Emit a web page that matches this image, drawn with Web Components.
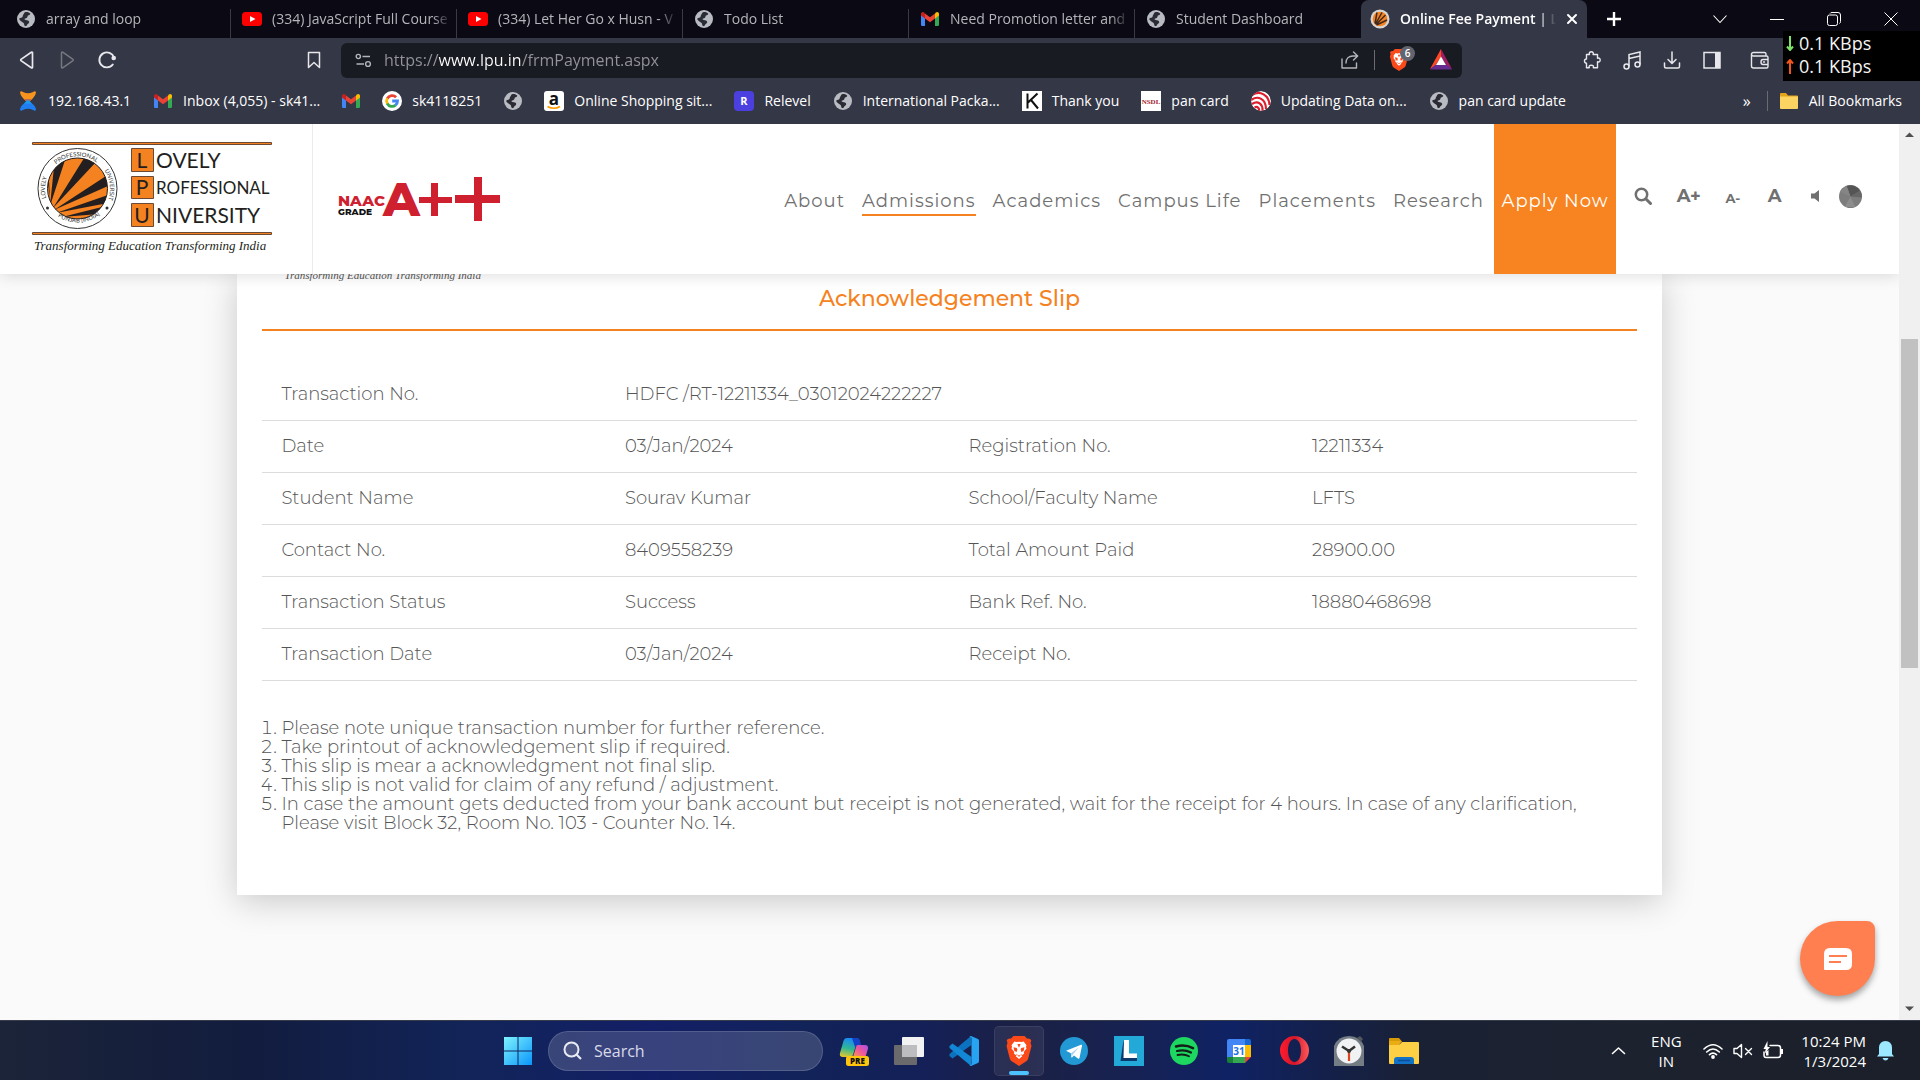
<!DOCTYPE html>
<html lang="en">
<head>
<meta charset="utf-8">
<title>Online Fee Payment | Lovely Professional University</title>
<style>
  html, body { margin: 0; height: 100%; }
  body { font-family: "Segoe UI", "Open Sans", "Noto Sans", sans-serif; overflow: hidden; }
</style>
</head>
<body>
<desktop-screen></desktop-screen>

<template id="t-desktop">
  <style>
    :host { display: flex; flex-direction: column; height: 100vh; background: #fafafa; }
    .view { flex: 1; display: flex; min-height: 0; }
    .page { flex: 1; min-width: 0; display: flex; flex-direction: column; overflow: hidden; }
  </style>
  <tab-strip></tab-strip>
  <nav-toolbar></nav-toolbar>
  <bookmark-bar></bookmark-bar>
  <div class="view">
    <div class="page">
      <site-header></site-header>
      <payment-slip></payment-slip>
    </div>
    <scroll-rail></scroll-rail>
  </div>
  <chat-launcher></chat-launcher>
  <task-bar></task-bar>
</template>

<template id="t-tab">
  <style>
    :host { display: block; width: 226px; flex: 0 1 226px; min-width: 0; box-sizing: border-box; border-right: 1px solid #3a3a42; height: 29px; margin-top: 9px; }
    :host([active]) { background: #343746; border-radius: 8px 8px 0 0; border-right: 0; height: 38px; margin-top: 0; }
    :host([last]) { border-right: 0; }
    .tab { display: flex; align-items: center; width: 100%; height: 29px; padding: 0 5px 9px 11px; box-sizing: border-box; gap: 10px; }
    :host([active]) .tab { height: 38px; padding: 0 9px 0 9px; }
    button { all: unset; display: flex; align-items: center; gap: 10px; flex: 1; min-width: 0; font-size: 14px; line-height: 20px; color: #b4b5ba; }
    .t { flex: 1; white-space: nowrap; overflow: hidden; -webkit-mask-image: linear-gradient(90deg, #000 calc(100% - 18px), transparent); mask-image: linear-gradient(90deg, #000 calc(100% - 18px), transparent); }
    :host([active]) button { color: #fff; font-weight: 600; }
    .x { flex: none; display: none; }
    :host([active]) .x { display: flex; }
  </style>
  <div class="tab"><button role="tab"><slot name="icon"></slot><span class="t"><slot></slot></span></button><button class="x" aria-label="Close tab"><app-icon name="cross" size="12"></app-icon></button></div>
</template>

<template id="t-tabs">
  <style>
    :host { display: flex; height: 38px; background: #0b0a14; padding-left: 5px; color: #fff; }
    .new { all: unset; width: 54px; display: flex; align-items: center; justify-content: center; }
    .sp { flex: 1; }
    .win { display: flex; margin-right: 1px; }
    .win button { all: unset; width: 57px; display: flex; align-items: center; justify-content: center; }
  </style>
  <browser-tab><app-icon slot="icon" name="globe" size="20"></app-icon>array and loop</browser-tab>
  <browser-tab><app-icon slot="icon" name="youtube" size="20"></app-icon>(334) JavaScript Full Course</browser-tab>
  <browser-tab><app-icon slot="icon" name="youtube" size="20"></app-icon>(334) Let Her Go x Husn - V</browser-tab>
  <browser-tab><app-icon slot="icon" name="globe" size="20"></app-icon>Todo List</browser-tab>
  <browser-tab><app-icon slot="icon" name="gmail" size="20"></app-icon>Need Promotion letter and</browser-tab>
  <browser-tab last><app-icon slot="icon" name="globe" size="20"></app-icon>Student Dashboard</browser-tab>
  <browser-tab active><app-icon slot="icon" name="lpu" size="20"></app-icon>Online Fee Payment | L</browser-tab>
  <button class="new" aria-label="New tab"><app-icon name="plus" size="16"></app-icon></button>
  <span class="sp"></span>
  <div class="win">
    <button aria-label="Search tabs"><app-icon name="chev" size="16"></app-icon></button>
    <button aria-label="Minimise"><app-icon name="min" size="14"></app-icon></button>
    <button aria-label="Restore"><app-icon name="restore" size="14"></app-icon></button>
    <button aria-label="Close"><app-icon name="close" size="14"></app-icon></button>
  </div>
</template>

<template id="t-toolbar">
  <style>
    :host { display: flex; align-items: center; height: 44px; background: #343746; padding: 0 137px 0 17px; position: relative; color: #e8e8ec; }
    button { all: unset; display: flex; align-items: center; justify-content: center; width: 20px; height: 28px; }
    .left { display: flex; gap: 20px; flex: 0 1 324px; }
    .left .mark { margin-left: auto; margin-right: 17px; }
    .dim { color: #76777f; }
    .bar { flex: 0 1 1121px; height: 35px; background: #191b22; border-radius: 6px; display: flex; align-items: center; box-sizing: border-box; padding: 0 11px 0 14px; color: #b4b5ba; }
    input { flex: 1; min-width: 0; border: 0; outline: 0; padding: 0; margin-left: 12px; height: 30px; font: 16px "Segoe UI", "Open Sans", "Noto Sans", sans-serif; color: transparent; -webkit-text-fill-color: transparent; -webkit-background-clip: text; background-clip: text; }
    .sep { width: 1px; height: 20px; background: #6a6b72; margin: 0 13px 0 14px; }
    .shield { position: relative; width: 26px; justify-content: flex-start; margin-right: 17px; }
    .shield i { position: absolute; right: -1px; top: 0; width: 15px; height: 15px; border-radius: 50%; background: #62656f; color: #fff; font: 600 10px/15px "Open Sans", sans-serif; text-align: center; }
    .right { display: flex; flex: 1; justify-content: flex-end; gap: 20px; padding-right: 14px; }
    .right .wallet { margin-left: 7px; }
    .net { position: absolute; right: 0; top: -7px; width: 137px; height: 50px; background: #000; box-sizing: border-box; padding: 1px 3px; font-size: 18px; line-height: 23px; color: #f4f4f4; z-index: 2; }
    .net div { display: flex; align-items: center; gap: 5px; height: 23px; white-space: nowrap; }
    .g { color: #7be26a; } .r { color: #f2551c; }
  </style>
  <div class="left">
    <button aria-label="Back"><app-icon name="back" size="18"></app-icon></button>
    <button class="dim" aria-label="Forward"><app-icon name="fwd" size="18"></app-icon></button>
    <button aria-label="Reload"><app-icon name="reload" size="20"></app-icon></button>
    <button class="mark" aria-label="Bookmark"><app-icon name="mark" size="18"></app-icon></button>
  </div>
  <div class="bar">
    <app-icon name="tune" size="17"></app-icon>
    <input type="text" aria-label="Address" value="https://www.lpu.in/frmPayment.aspx">
    <button aria-label="Share"><app-icon name="share" size="20"></app-icon></button>
    <span class="sep"></span>
    <button class="shield" aria-label="Shields"><app-icon name="brave" size="22"></app-icon><i>6</i></button>
    <button aria-label="Rewards"><app-icon name="bat" size="22"></app-icon></button>
  </div>
  <div class="right">
    <button aria-label="Extensions"><app-icon name="puzzle" size="18"></app-icon></button>
    <button aria-label="Media"><app-icon name="music" size="19"></app-icon></button>
    <button aria-label="Downloads"><app-icon name="down" size="18"></app-icon></button>
    <button aria-label="Sidebar"><app-icon name="side" size="18"></app-icon></button>
    <button class="wallet" aria-label="Wallet"><app-icon name="wallet" size="19"></app-icon></button>
  </div>
  <div class="net">
    <div><app-icon class="g" name="adown" size="8" h="15"></app-icon><span>0.1 KBps</span></div>
    <div><app-icon class="r" name="aup" size="8" h="15"></app-icon><span>0.1 KBps</span></div>
  </div>
</template>

<template id="t-bm">
  <style>
    :host { display: block; flex: none; }
    :host([bare]) { margin: 0 -1px; }
    a { display: flex; align-items: center; gap: 10px; color: #fff; text-decoration: none; font-size: 14px; line-height: 20px; white-space: nowrap; }
    :host([bare]) a { gap: 0; }
  </style>
  <a href="#"><slot name="icon"></slot><span><slot></slot></span></a>
</template>

<template id="t-bookmarks">
  <style>
    :host { display: flex; align-items: center; height: 42px; background: #343746; padding: 0 18px 4px; box-sizing: border-box; gap: 22px; color: #fff; }
    .sp { flex: 1; }
    .more { all: unset; width: 10px; font-size: 16px; line-height: 20px; }
    .all { border-left: 1px solid #6a6b72; padding-left: 11px; margin-left: -8px; }
  </style>
  <bookmark-link><app-icon slot="icon" name="xender" size="20"></app-icon>192.168.43.1</bookmark-link>
  <bookmark-link><app-icon slot="icon" name="gmail" size="20"></app-icon>Inbox (4,055) - sk41...</bookmark-link>
  <bookmark-link bare><app-icon slot="icon" name="gmail" size="20"></app-icon></bookmark-link>
  <bookmark-link><app-icon slot="icon" name="google" size="20"></app-icon>sk4118251</bookmark-link>
  <bookmark-link bare><app-icon slot="icon" name="globe" size="20"></app-icon></bookmark-link>
  <bookmark-link><app-icon slot="icon" name="amazon" size="20"></app-icon>Online Shopping sit...</bookmark-link>
  <bookmark-link><app-icon slot="icon" name="relevel" size="20"></app-icon>Relevel</bookmark-link>
  <bookmark-link><app-icon slot="icon" name="globe" size="20"></app-icon>International Packa...</bookmark-link>
  <bookmark-link><app-icon slot="icon" name="kicon" size="20"></app-icon>Thank you</bookmark-link>
  <bookmark-link><app-icon slot="icon" name="nsdl" size="20"></app-icon>pan card</bookmark-link>
  <bookmark-link><app-icon slot="icon" name="airtel" size="20"></app-icon>Updating Data on...</bookmark-link>
  <bookmark-link><app-icon slot="icon" name="globe" size="20"></app-icon>pan card update</bookmark-link>
  <span class="sp"></span>
  <button class="more" aria-label="More bookmarks">»</button>
  <bookmark-link class="all"><app-icon slot="icon" name="folder" size="20"></app-icon>All Bookmarks</bookmark-link>
</template>

<template id="t-header">
  <style>
    :host { display: flex; flex: none; height: 150px; background: #fff; box-shadow: 0 2px 14px rgba(0,0,0,.13); position: relative; z-index: 2; font-family: Montserrat, Inter, sans-serif; color: #707070; }
    .logo { flex: none; width: 280px; border-right: 1px solid #ebebeb; padding: 18px 0 0 32px; }
    .naac { flex: none; padding: 53px 0 0 25px; }
    nav { margin-left: auto; display: flex; gap: 17px; align-items: flex-start; padding-top: 65px; font-size: 18px; line-height: 24px; letter-spacing: 1px; white-space: nowrap; font-weight: 400; }
    a { color: inherit; text-decoration: none; }
    nav a { padding-bottom: 1px; }
    nav a.on { border-bottom: 2px solid #f58220; }
    .apply { background: #f88421; color: #fff; width: 122px; margin-left: 10px; text-align: center; padding-top: 65px; box-sizing: border-box; font-size: 18px; line-height: 24px; letter-spacing: 1px; white-space: nowrap; }
    .tools { display: flex; align-items: center; height: 30px; margin-top: 57px; width: 283px; box-sizing: border-box; padding: 0 37px 0 18px; justify-content: space-between; }
    .tools button { all: unset; display: flex; align-items: center; font-weight: 700; font-size: 18px; line-height: 24px; }
    .tools .s { font-size: 13px; padding-top: 3px; }
    .tools .a { padding-left: 3px; }
    .tools .v { width: 14px; justify-content: flex-end; margin-right: -6px; }
  </style>
  <div class="logo"><lpu-logo></lpu-logo></div>
  <div class="naac"><naac-logo></naac-logo></div>
  <nav>
    <a href="#">About</a><a href="#" class="on">Admissions</a><a href="#">Academics</a><a href="#">Campus Life</a><a href="#">Placements</a><a href="#">Research</a>
  </nav>
  <a href="#" class="apply">Apply Now</a>
  <div class="tools">
    <button aria-label="Search"><app-icon name="find" size="18"></app-icon></button>
    <button>A+</button><button class="s">A-</button><button class="a">A</button>
    <button class="v" aria-label="Sound"><app-icon name="spk" size="10" h="14"></app-icon></button>
    <button aria-label="Contrast"><app-icon name="pie" size="23"></app-icon></button>
  </div>
</template>

<template id="t-lpu">
  <style>:host { display: block; } svg { display: block; }</style>
  <svg width="242" height="118" viewBox="32 142 242 118">
    <g fill="#f58220" stroke="#6b4a35" stroke-width="1"><path d="M32.5 142.5h239v2h-239zM32.5 232.5h239v2h-239z"/></g>
    <ellipse cx="77.500" cy="188.500" rx="39.500" ry="40" fill="#fff" stroke="#333" stroke-width="1"/>
    <clipPath id="c"><ellipse cx="77.500" cy="188.500" rx="30" ry="30.500"/></clipPath>
    <ellipse cx="77.500" cy="188.500" rx="30" ry="30.500" fill="#f58220" stroke="#231f20" stroke-width="1"/>
    <g clip-path="url(#c)" fill="#231f20"><path d="M50 206L55 157h11zM53 208L86 155l10 7zM54 210L106 176l4 9zM56 213L108 195v8zM62 217L102 207l-3 7zM50 199L46 168l2-5z"/></g>
    <path id="top" d="M47 200A32.500 32.500 0 1 1 108 200" fill="none"/>
    <path id="bot" d="M53 213A36.500 36.500 0 0 0 102 213" fill="none"/>
    <g font-family="Lato, sans-serif" font-size="6" fill="#333">
      <text><textPath href="#top" startOffset="2">LOVELY</textPath></text>
      <text><textPath href="#top" startOffset="39">PROFESSIONAL</textPath></text>
      <text><textPath href="#top" startOffset="94">UNIVERSITY</textPath></text>
      <text><textPath href="#bot" startOffset="6">PUNJAB [INDIA]</textPath></text>
    </g>
    <g fill="#333"><circle cx="47.500" cy="208" r="1.500"/><circle cx="107" cy="208" r="1.500"/></g>
    <g fill="#f58220" stroke="#6b4a35"><path d="M131.500 148.500h22v23h-22zM131.500 176.500h22v22h-22zM131.500 203.500h22v23h-22z"/></g>
    <g font-family="Lato, Open Sans, sans-serif" font-size="21" fill="#231f20">
      <g text-anchor="middle"><text x="142" y="168">L</text><text x="142" y="195">P</text><text x="142" y="223">U</text></g>
      <text x="156" y="168">OVELY</text><text x="156" y="194" font-size="17">ROFESSIONAL</text><text x="156" y="223">NIVERSITY</text>
    </g>
    <text x="34" y="250" font-family="Liberation Serif, serif" font-style="italic" font-size="13" fill="#231f20">Transforming Education Transforming India</text>
  </svg>
</template>

<template id="t-naac">
  <style>:host { display: block; } svg { display: block; }</style>
  <svg width="164" height="46" viewBox="338 177 164 46">
    <g font-family="Montserrat, Inter, sans-serif" font-weight="800">
      <text x="338" y="206" font-size="15" fill="#cf202f">NAAC</text>
      <text x="338" y="215" font-size="9" fill="#111">GRADE</text>
      <text x="383" y="216" font-size="47" fill="#cf202f">A</text>
    </g>
    <path fill="#cf202f" d="M431 183h7v14h14v6h-14v13h-7v-13h-12v-6h12zM474 177h8v18h18v8h-18v18h-8v-18h-19v-8h19z"/>
  </svg>
</template>

<template id="t-slip">
  <style>
    :host { display: block; flex: none; width: 75%; margin: 0 auto; box-sizing: border-box; background: #fff; padding: 0 25px 62px; box-shadow: 0 6px 32px rgba(0,0,0,.2); font-family: Montserrat, Inter, sans-serif; font-weight: 300; color: #555; font-size: 18px; line-height: 19px; }
    .tag { height: 10px; display: flex; align-items: flex-end; overflow: hidden; padding-left: 22px; font: italic 11px/18px "Liberation Serif", serif; color: #555; white-space: nowrap; }
    h1 { margin: 0 0 38px; padding-bottom: 15px; border-bottom: 2px solid #f58220; color: #f58220; text-align: center; font-size: 22px; line-height: 30px; font-weight: 500; }
    table { width: 100%; border-collapse: collapse; table-layout: fixed; }
    td, th { font-weight: 300; text-align: left; padding: 16px 19px; border-bottom: 1px solid #dcdcdc; white-space: nowrap; height: 19px; }
    ol { margin: 38px 0 0; padding: 0 25px 0 19px; }
  </style>
  <div class="tag">Transforming Education Transforming India</div>
  <h1>Acknowledgement Slip</h1>
  <table>
    <tr><th scope="row">Transaction No.</th><td colspan="3">HDFC /RT-12211334_03012024222227</td></tr>
    <tr><th scope="row">Date</th><td>03/Jan/2024</td><th scope="row">Registration No.</th><td>12211334</td></tr>
    <tr><th scope="row">Student Name</th><td>Sourav Kumar</td><th scope="row">School/Faculty Name</th><td>LFTS</td></tr>
    <tr><th scope="row">Contact No.</th><td>8409558239</td><th scope="row">Total Amount Paid</th><td>28900.00</td></tr>
    <tr><th scope="row">Transaction Status</th><td>Success</td><th scope="row">Bank Ref. No.</th><td>18880468698</td></tr>
    <tr><th scope="row">Transaction Date</th><td>03/Jan/2024</td><th scope="row">Receipt No.</th><td></td></tr>
  </table>
  <ol>
    <li>Please note unique transaction number for further reference.</li>
    <li>Take printout of acknowledgement slip if required.</li>
    <li>This slip is mear a acknowledgment not final slip.</li>
    <li>This slip is not valid for claim of any refund / adjustment.</li>
    <li>In case the amount gets deducted from your bank account but receipt is not generated, wait for the receipt for 4 hours. In case of any clarification, Please visit Block 32, Room No. 103 - Counter No. 14.</li>
  </ol>
</template>

<template id="t-scroll">
  <style>
    :host { display: flex; flex-direction: column; align-items: center; width: 21px; background: #f0f0f0; padding: 8px 0; box-sizing: border-box; color: #505050; position: relative; z-index: 3; }
    .track { flex: 1; width: 17px; display: flex; flex-direction: column; }
    .a { flex: 201; } .b { flex: 329; background: #c1c1c1; } .c { flex: 338; }
  </style>
  <app-icon name="sup" size="9" h="6"></app-icon>
  <div class="track"><div class="a"></div><div class="b"></div><div class="c"></div></div>
  <app-icon name="sdn" size="9" h="6"></app-icon>
</template>

<template id="t-chat">
  <style>
    :host { position: absolute; right: 45px; bottom: 84px; z-index: 4; }
    button { all: unset; display: flex; align-items: center; justify-content: center; width: 75px; height: 75px; border-radius: 50% 8px 50% 50%; background: #ff7f50; box-shadow: 0 4px 6px rgba(0,0,0,.35); }
  </style>
  <button aria-label="Chat"><app-icon name="chat" size="28" h="22"></app-icon></button>
</template>

<template id="t-taskbar">
  <style>
    :host { display: flex; align-items: center; flex: none; height: 60px; box-sizing: border-box; border-top: 1px solid #363c4a; color: #fff; position: relative; z-index: 3;
      background: linear-gradient(90deg, #1b2438 0%, #121c3e 13%, #12245a 25%, #131f66 34%, #12235a 42%, #142058 48%, #1b2044 53%, #182250 58%, #0f2264 64%, #14204a 69%, #1a2134 74%, #1c222e 85%, #1b1f2a 100%); }
    button { all: unset; display: flex; align-items: center; justify-content: center; width: 50px; height: 50px; border-radius: 5px; box-sizing: border-box; position: relative; }
    .apps { display: flex; gap: 5px; padding-left: 6px; }
    .pill { display: flex; align-items: center; width: 275px; height: 40px; border-radius: 20px; margin-left: 5px; background: rgba(255,255,255,.16); border: 1px solid rgba(255,255,255,.14); box-sizing: border-box; padding: 0 14px; gap: 12px; }
    input { all: unset; flex: 1; min-width: 0; font: 16px "Segoe UI", "Open Sans", sans-serif; color: #fff; }
    input::placeholder { color: #d8daea; opacity: 1; }
    .on { background: rgba(255,255,255,.07); border: 1px solid rgba(255,255,255,.08); }
    .on::after { content: ""; position: absolute; left: 14px; bottom: 0; width: 20px; height: 4px; border-radius: 2px; background: #4cc2ff; }
    .start, .pill, .apps { flex: none; }
    .side { flex: 1 1 0; display: flex; align-items: center; justify-content: flex-end; padding-right: 26px; font-size: 15px; line-height: 20px; text-align: center; }
    .lead { flex: 0 1 493px; }
    .lang { width: 46px; margin-left: 17px; }
    .tray { display: flex; gap: 10px; align-items: center; margin: 0 18px 0 14px; }
    .clock { text-align: right; margin-right: 11px; white-space: nowrap; }
  </style>
  <span class="lead"></span>
  <button class="start" aria-label="Start"><app-icon name="windows" size="30"></app-icon></button>
  <label class="pill"><app-icon name="tsearch" size="19"></app-icon><input type="search" placeholder="Search" aria-label="Search"></label>
  <div class="apps">
    <button aria-label="Copilot"><app-icon name="copilot" size="30"></app-icon></button>
    <button aria-label="Task view"><app-icon name="tview" size="30"></app-icon></button>
    <button aria-label="VS Code"><app-icon name="vscode" size="30"></app-icon></button>
    <button class="on" aria-label="Brave"><app-icon name="brave" size="30"></app-icon></button>
    <button aria-label="Telegram"><app-icon name="telegram" size="28"></app-icon></button>
    <button aria-label="L"><app-icon name="lapp" size="30"></app-icon></button>
    <button aria-label="Spotify"><app-icon name="spotify" size="28"></app-icon></button>
    <button aria-label="Calendar"><app-icon name="cal" size="24"></app-icon></button>
    <button aria-label="Opera"><app-icon name="opera" size="29"></app-icon></button>
    <button aria-label="Clock"><app-icon name="clockapp" size="30"></app-icon></button>
    <button aria-label="Files"><app-icon name="explorer" size="30"></app-icon></button>
  </div>
  <div class="side">
    <app-icon name="tup" size="15"></app-icon>
    <div class="lang">ENG<br>IN</div>
    <div class="tray"><app-icon name="wifi" size="20"></app-icon><app-icon name="mute" size="20"></app-icon><app-icon name="batt" size="20"></app-icon></div>
    <div class="clock">10:24 PM<br>1/3/2024</div>
    <app-icon name="bell" size="17" h="20"></app-icon>
  </div>
</template>

<script>
const L = 'fill="none" stroke="currentColor" stroke-linecap="round" stroke-linejoin="round"';
const lion = '<path fill="#fff" d="M12 4.500l2 .3 1.700-.4 2.300 2.900-.5 1.500.6 1-2.300 3 .3 1.200-1.300 1.100-1.600-.7 1.400 1.700-2.600 2.300-2.600-2.300 1.400-1.700-1.600.7-1.300-1.100.3-1.200-2.300-3 .6-1L6 7.300l2.300-2.900 1.700.4z"/><path fill="#fb4a1a" d="M7.600 9l2.600.6.5 1.200-.6 2-1.800-.9zM16.400 9l-2.600.6-.5 1.200.6 2 1.800-.9zM10.700 6.300h2.600L12 9.400zM10.300 14.700l1.700.9 1.700-.9-1.700 2z"/>';
/* name: [viewBox, markup] */
const ICONS = {
  globe: ['0 0 20 20', '<circle cx="10" cy="10" r="9" fill="#b9bbc2"/><path fill="#2a2b35" d="M9 3.200c2-.5 4.200.2 5.300 1.500-.3 1.400-1.500 1.200-2.300 1.900-.8.800-.2 1.600-1.300 2.300-1 .5-1.600.2-2.100 1.100-.3.900 1 1 2.200 1.200 1.700.2 2.700 1 2.300 2.400-.4 1.300-1.600 1.400-2.100 2.500-.3.800-.9 1.300-2 1-1.100-.7-.6-2-1.200-2.900C7 13.200 4.800 12.600 3.200 10.300c.2-1.600 1.700-1.200 2.700-1.700 1.200-.6.5-1.700 1.200-2.500C7.800 5.200 8 3.600 9 3.200z"/>'],
  youtube: ['0 0 20 20', '<rect x="0" y="3" width="20" height="14" rx="3.500" fill="#f00"/><path fill="#fff" d="M8 7l5.500 3L8 13z"/>'],
  gmail: ['0 0 20 20', '<path fill="#4285f4" d="M1 5l4 3v9H2.300A1.300 1.300 0 0 1 1 15.700z"/><path fill="#34a853" d="M19 5l-4 3v9h2.700a1.300 1.300 0 0 0 1.300-1.300z"/><path fill="#fbbc04" d="M15 4.500V9.500l4-3V5c0-1.800-2-2.500-3.200-1.400z"/><path fill="#c5221f" d="M1 5v1.500l4 3v-5l-.8-.9C3 2.500 1 3.200 1 5z"/><path fill="#ea4335" d="M5 9.500v-5l5 3.800 5-3.800v5l-5 3.800z"/>'],
  lpu: ['0 0 20 20', '<circle cx="10" cy="10" r="9.500" fill="#d7d5d2"/><circle cx="10" cy="10" r="7.300" fill="#f58220"/><g stroke="#42291c" stroke-width="1.500"><path d="M5 14.500L7 3.500M5.500 15L12 3.500M6 15.500l9.500-9.500M6.500 16L17 11"/></g>'],
  cross: ['0 0 12 12', '<path d="M2 2l8 8M10 2l-8 8" '+L+' stroke-width="2"/>'],
  plus: ['0 0 16 16', '<path d="M8 1v14M1 8h14" stroke="currentColor" stroke-width="2.400"/>'],
  chev: ['0 0 16 16', '<path d="M1.500 4.500L8 11.500l6.500-7" fill="none" stroke="currentColor" stroke-width="1.100"/>'],
  min: ['0 0 14 14', '<path d="M0 7.500h14" stroke="currentColor"/>'],
  restore: ['0 0 14 14', '<rect x=".5" y="3" width="10" height="10.500" rx="2" fill="none" stroke="currentColor"/><path d="M3 1.500Q3.500.5 5 .5h6q2.500 0 2.500 2.500v6.500q0 1.500-1 2" fill="none" stroke="currentColor"/>'],
  close: ['0 0 14 14', '<path d="M.5.5l13 13M13.500.5l-13 13" stroke="currentColor"/>'],
  back: ['0 0 18 18', '<path d="M14.500 1.500v15q-.3.800-1.200.3L3 9.600q-.5-.6 0-1.200L13.300 1.200q.8-.4 1.200.3z" '+L+' stroke-width="1.700"/>'],
  fwd: ['0 0 18 18', '<path d="M3.500 1.500v15q.3.800 1.200.3L15 9.600q.5-.6 0-1.200L4.700 1.200q-.8-.4-1.200.3z" '+L+' stroke-width="1.500"/>'],
  reload: ['0 0 20 20', '<path d="M15.800 14.500A7.500 7.500 0 1 1 17 7.500" '+L+' stroke-width="1.900"/><circle cx="16.700" cy="8" r="2.300" fill="currentColor"/>'],
  mark: ['0 0 18 18', '<path d="M3.500 1.500h11v15L9 11.500l-5.500 5z" '+L+' stroke-width="1.500"/>'],
  tune: ['0 0 17 17', '<g fill="none" stroke="currentColor" stroke-width="1.400"><circle cx="3.300" cy="4.500" r="2.100"/><path d="M7.500 4.500H15M1.500 12H9"/><circle cx="13" cy="12" r="2.400"/></g>'],
  share: ['0 0 20 20', '<path d="M2 9v9h14.500v-5M6 13c0-4.500 3-7 7-7h4M13.500 2l4.200 4-4.200 4" '+L+' stroke-width="1.400"/>'],
  brave: ['0 0 24 24', '<path fill="#fb4a1a" d="M7.500 0h9l2 2.200c2-.5 3 .7 3.300 1.400l-.6 2 .8 2.300-2.500 9.600c-.5 1.600-1 2.200-2 2.900L12 24l-5.500-3.600c-1-.7-1.500-1.300-2-2.900L2 7.900l.8-2.300-.6-2c.3-.7 1.300-1.900 3.300-1.400z"/>'+lion],
  bat: ['0 0 22 22', '<path fill="#ff4724" d="M11 0L0 20l5-3 6-9z"/><path fill="#9e1f63" d="M11 0l11 20-5-3-6-9z"/><path fill="#662d91" d="M0 20.500h22L17 16H5z"/><path fill="#fff" d="M11 7.500l5 8.500H6z"/>'],
  puzzle: ['0 0 18 18', '<path d="M3.500 3.500h3C5.800 1.800 6.800.8 8.300.8s2.500 1 1.800 2.700h4.400v3.800c1.700-.7 2.700.3 2.700 1.700s-1 2.400-2.700 1.700v6h-4.200c.7-1.800-.4-2.500-2-2.500s-2.700.7-2 2.500H3.500v-4.500C.800 12.200.800 8 3.500 8z" '+L+' stroke-width="1.400"/>'],
  music: ['0 0 19 19', '<g fill="none" stroke="currentColor" stroke-width="1.500"><circle cx="3.500" cy="15.500" r="2.500"/><circle cx="14.500" cy="13.500" r="2.500"/><path d="M6 15.500v-12L17 1v12.500M6 7.500L17 5"/></g>'],
  down: ['0 0 18 18', '<path d="M9 1v11M5 8.500L9 12.500l4-4M1.500 12v3.500q0 1.500 1.500 1.500h12q1.500 0 1.500-1.500V12" '+L+' stroke-width="1.500"/>'],
  side: ['0 0 18 18', '<rect x="1" y="1.500" width="16" height="15.500" fill="none" stroke="currentColor" stroke-width="1.500"/><path d="M12 1.500h5V17h-5z" fill="currentColor"/>'],
  wallet: ['0 0 19 19', '<path d="M16 5V3q0-1.500-1.500-1.500h-11Q1.500 1.500 1.500 3.500V15q0 2 2 2h13q1.500 0 1.500-1.500v-9Q18 5 16.500 5h-13q-2 0-2-2M18 8.500h-5q-2 0-2 2.500t2 2.500h5M13.500 11h1" '+L+' stroke-width="1.400"/>'],
  adown: ['0 0 8 15', '<path d="M4 0v14M1 10.500l3 3.500 3-3.500" fill="none" stroke="currentColor" stroke-width="2"/>'],
  aup: ['0 0 8 15', '<path d="M4 15V1M1 4.500L4 1l3 3.500" fill="none" stroke="currentColor" stroke-width="2"/>'],
  xender: ['0 0 20 20', '<path fill="#f7941e" d="M2 1q1-1.500 3 0q5 2.500 10 0q2-1.500 3 0q0 4-6 9H8Q2 5 2 1z"/><path fill="#d9622a" d="M6 8h8l-4 4z"/><path fill="#1f7ff0" d="M10 8q1 2 4 4.500 4 3 4 6.500-1 1.500-3 0-5-2.500-10 0-2 1.500-3 0 0-3.500 4-6.500 3-2.500 4-4.500z"/><path fill="#19b0f5" d="M10 8q1 2 4 4.500H6Q9 10 10 8z" opacity=".6"/>'],
  google: ['0 0 20 20', '<circle cx="10" cy="10" r="10" fill="#fff"/><g fill="none" stroke-width="2.800"><path stroke="#ea4335" d="M5.300 7.500a5.500 5.500 0 0 1 8.800-1.300"/><path stroke="#fbbc05" d="M5.300 7.300a5.600 5.600 0 0 0 0 5.400"/><path stroke="#34a853" d="M5.200 12.500a5.500 5.500 0 0 0 8.400 1.600"/><path stroke="#4285f4" d="M10.200 10h5.300a5.500 5.500 0 0 1-2 4.200"/></g>'],
  amazon: ['0 0 20 20', '<rect width="20" height="20" rx="3" fill="#fff"/><text x="10" y="13.500" text-anchor="middle" font-family="Open Sans, sans-serif" font-weight="700" font-size="17" fill="#111">a</text><path d="M3.500 15.500q6.500 3.500 12.500 0" fill="none" stroke="#f90" stroke-width="1.600"/>'],
  relevel: ['0 0 20 20', '<rect width="20" height="20" rx="4" fill="#4b3fe0"/><text x="10" y="14" text-anchor="middle" font-family="Open Sans, sans-serif" font-weight="700" font-size="11" fill="#fff">R</text>'],
  kicon: ['0 0 20 20', '<rect width="20" height="20" fill="#fff"/><path d="M5.500 2.500v15M15.500 2.500L6 11.500M9 9l7 8.500" fill="none" stroke="#111" stroke-width="2"/>'],
  nsdl: ['0 0 20 20', '<rect width="20" height="20" fill="#fff"/><text x="10" y="12.500" text-anchor="middle" font-family="Liberation Serif, serif" font-weight="700" font-size="7" fill="#a3222c">NSDL</text>'],
  airtel: ['0 0 20 20', '<clipPath id="k"><circle cx="10" cy="10" r="10"/></clipPath><g clip-path="url(#k)"><circle cx="10" cy="10" r="10" fill="#fff"/><g fill="none" stroke="#dc1f2e" stroke-width="2.200"><path d="M1 4C9-1 18 4 18.500 14M0 9c7-5 15-1 15 9M1 13c6-4 11 0 10.500 7M3.500 16.500c3-1.500 5 .5 4.500 3.500"/></g></g>'],
  folder: ['0 0 20 20', '<path fill="#e3a51a" d="M1 3q0-1 1-1h5l2 2.500h9q1 0 1 1V8H1z"/><path fill="#fcd462" d="M1 5.500h18V17q0 1-1 1H2q-1 0-1-1z"/>'],
  find: ['0 0 18 18', '<circle cx="7.500" cy="7.500" r="5.700" fill="none" stroke="currentColor" stroke-width="2.500"/><path d="M12 12l4.500 4.500" stroke="currentColor" stroke-width="3" stroke-linecap="round"/>'],
  spk: ['0 0 10 14', '<path fill="currentColor" d="M1 4.500h3.500L9 1v12L4.500 9.500H1z"/>'],
  pie: ['0 0 24 24', '<circle cx="12" cy="12" r="12" fill="#7d7d7d"/><path fill="#555" d="M12 12L8 1a12 12 0 0 1 14 5z"/><path fill="#666" d="M12 12l10-6a12 12 0 0 1 2 7z"/><path fill="#8d8d8d" d="M12 12l5 11H6z"/><path fill="#858585" d="M12 12L1 7A12 12 0 0 1 8 1z"/>'],
  sup: ['0 0 9 6', '<path fill="currentColor" d="M0 5L4.500.5 9 5z"/>'],
  sdn: ['0 0 9 6', '<path fill="currentColor" d="M0 .5h9L4.500 5z"/>'],
  chat: ['0 0 28 22', '<path fill="#fff" d="M6 0h16q6 0 6 6v10q0 6-6 6H1q-1 0-1-1V6q0-6 6-6z"/><path d="M5 8h18M5 14h12" stroke="#ff7f50" stroke-width="2"/>'],
  windows: ['0 0 30 30', '<defs><linearGradient id="w" x1="0" y1="0" x2="1" y2="1"><stop offset="0" stop-color="#7df3fd"/><stop offset="1" stop-color="#0a95fb"/></linearGradient></defs><path fill="url(#w)" d="M1 1h13.500v13.500H1zM15.500 1H29v13.500H15.500zM1 15.500h13.500V29H1zM15.500 15.500H29V29H15.500z"/>'],
  tsearch: ['0 0 19 19', '<circle cx="8.500" cy="8.500" r="7" fill="rgba(255,255,255,.1)" stroke="#e8eaf4" stroke-width="2"/><path d="M13.500 13.500l4.500 4.500" stroke="#e8eaf4" stroke-width="2.200"/>'],
  copilot: ['0 0 30 30', '<defs><linearGradient id="a" x1=".3" y1="0" x2=".1" y2="1"><stop offset="0" stop-color="#1a8cf0"/><stop offset=".5" stop-color="#2fb795"/><stop offset="1" stop-color="#f0c827"/></linearGradient><linearGradient id="b" x1="1" y1="0" x2="0" y2="1"><stop offset="0" stop-color="#a650e8"/><stop offset=".5" stop-color="#f0569a"/><stop offset="1" stop-color="#f79a4c"/></linearGradient></defs><path fill="url(#a)" d="M8 2h11l-5 17q-.6 2-3 2H4q-4 0-3-4L4.500 5Q5.300 2 8 2z"/><path fill="#1540c8" d="M13 2h5q2.500 0 3 2.500L22 9h-3q-2 0-3 2z"/><path fill="url(#b)" d="M18.500 9H26q3.500 0 3 3.500L26.500 21H14l3-10q.4-2 1.500-2z"/><rect x="7" y="20" width="23" height="10" rx="2.500" fill="#ffc40d"/><text x="18.500" y="28" text-anchor="middle" font-family="Open Sans, sans-serif" font-weight="800" font-size="8" fill="#111">PRE</text>'],
  tview: ['0 0 30 30', '<rect x="0" y="9" width="23" height="20" rx="1" fill="#6a6a6c"/><rect x="8" y="1" width="22" height="20" rx="1" fill="#f2f2f2"/><path fill="#bdbdbf" d="M8 9h15v12H8z"/>'],
  vscode: ['0 0 30 30', '<path d="M22.500 9L3.500 22.500l-3-2.500v-2L22 0z" fill="#0b72c0"/><path d="M22.500 21L3.500 7.500l-3 2.500v2L22 30z" fill="#1287d6"/><path fill="#27a3f2" d="M22 0l7 3q1 .5 1 2v20q0 1.500-1 2l-7 3q-1 0-1.500-1 2 .5 2-1.500V2.500q0-2-2-1.500.500-1 1.500-1z"/>'],
  telegram: ['0 0 28 28', '<circle cx="14" cy="14" r="14" fill="#2298d4"/><path fill="#fff" d="M6 13.700L21 7.800q1.300-.4 1 1L19.500 21q-.4 1.300-1.600.5L14 18.600l-2 2-.9-.3-.2-4z"/><path fill="#a9d4ec" d="M11 16.300l8-6-6 7-1.500 3z"/>'],
  lapp: ['0 0 30 30', '<rect width="30" height="30" fill="#22a9d8"/><path fill="#0b3a6e" d="M9.500 4L6.500 25H23v-3H12z"/><path fill="#fff" d="M10 4h5v13.500h8V22H9.500z"/>'],
  spotify: ['0 0 28 28', '<circle cx="14" cy="14" r="14" fill="#1ed760"/><g fill="none" stroke="#131f18" stroke-linecap="round"><path d="M6 9.500q9-2.500 17 1.700" stroke-width="2.600"/><path d="M7 14q7.500-2 14 1.500" stroke-width="2.200"/><path d="M7.500 18q6.500-1.500 11.500 1.300" stroke-width="1.800"/></g>'],
  cal: ['0 0 24 24', '<path fill="#4285f4" d="M2 0h16v6H6v12H0V2Q0 0 2 0z"/><path fill="#1967d2" d="M18 0h4q2 0 2 2v4h-6z"/><path fill="#fbbc04" d="M18 6h6v12h-6z"/><path fill="#34a853" d="M6 18h12v6H6z"/><path fill="#188038" d="M0 18h6v6H2q-2 0-2-2z"/><path fill="#ea4335" d="M18 18h6l-6 6z"/><path fill="#fff" d="M6 6h12v12H6z"/><text x="12" y="16" text-anchor="middle" font-family="Open Sans, sans-serif" font-weight="700" font-size="10" fill="#1a73e8">31</text>'],
  opera: ['0 0 29 29', '<defs><linearGradient id="o" x1="0" x2="1"><stop offset="0" stop-color="#ff1b2d"/><stop offset=".5" stop-color="#d3162a"/><stop offset="1" stop-color="#ff5a5a"/></linearGradient></defs><path fill="url(#o)" fill-rule="evenodd" d="M14.500 0a14.500 14.500 0 1 1 0 29 14.500 14.500 0 0 1 0-29zm0 3c-4 0-6.500 5-6.500 11.500S10.500 26 14.500 26 21 21 21 14.500 18.500 3 14.500 3z"/>'],
  clockapp: ['0 0 30 30', '<path fill="#747c84" d="M0 10Q4 0 15 0t15 10v20H0z"/><path fill="#50565c" d="M23 2l3-2 3 3-2 3z"/><circle cx="15" cy="15" r="12.500" fill="#f1f2f3"/><path d="M15 15L8 10.500M15 15l6-4.500" stroke="#333" stroke-width="2.500"/><path d="M15 16v9" stroke="#d8481b" stroke-width="2.200"/><circle cx="15" cy="15" r="2" fill="#333"/>'],
  explorer: ['0 0 30 30', '<path fill="#d99a09" d="M0 3q0-1 1-1h9l3 3.500H0z"/><path fill="#e9ac12" d="M0 5h13l-3 4H0z"/><path fill="#fdcf45" d="M0 9h9q1 0 2-1l2-2h16q1 0 1 1v20q0 1-1 1H1q-1 0-1-1z"/><path fill="#1272c8" d="M5 28v-4q0-3 3-3h14q3 0 3 3v4z"/><path d="M9 24.500h12" stroke="#0a4f97" stroke-width="1.500"/>'],
  tup: ['0 0 15 15', '<path d="M1.500 10.500L7.500 5l6 5.500" '+L+' stroke-width="1.600"/>'],
  wifi: ['0 0 20 20', '<g '+L+' stroke-width="1.600"><path d="M1 8q9-8.500 18 0M3.700 11q6.300-6 12.600 0M6.500 13.700q3.500-3.200 7 0"/></g><circle cx="10" cy="16" r="1.900" fill="currentColor"/>'],
  mute: ['0 0 20 20', '<path d="M1 7.500h3l4.500-4v13L4 12.500H1zM12.500 7.500l6 6M18.500 7.500l-6 6" '+L+' stroke-width="1.400"/>'],
  batt: ['0 0 20 20', '<path d="M7 4.500h8q2.500 0 2.500 2.500v7q0 2.500-2.500 2.500H3Q1 16.500 1 14v-3" '+L+' stroke-width="1.500"/><path fill="currentColor" d="M18 8h2v5h-2zM4.500 0L.500 8h2.300L1.500 13 7 6H4.500zM3 14.500V11l2.500-2v5.500z"/>'],
  bell: ['0 0 17 20', '<path fill="#9be8ff" d="M8.500 0Q14.500 0 15 6.500V13l2 2.500H0L2 13V6.500Q2.500 0 8.500 0zM5.500 17h6q-1 2.500-3 2.500t-3-2.500z"/>']
};

class AppIcon extends HTMLElement {
  connectedCallback() {
    if (this.shadowRoot) return;
    const [box, art] = ICONS[this.getAttribute('name')];
    const w = this.getAttribute('size'), h = this.getAttribute('h') || w;
    this.attachShadow({ mode: 'open' }).innerHTML =
      `<style>:host{display:block;flex:none}svg{display:block}</style><svg width="${w}" height="${h}" viewBox="${box}" aria-hidden="true">${art}</svg>`;
  }
}
customElements.define('app-icon', AppIcon);

const define = (tag, tpl, ready) => customElements.define(tag, class extends HTMLElement {
  constructor() {
    super();
    this.attachShadow({ mode: 'open' }).append(document.getElementById(tpl).content.cloneNode(true));
  }
  connectedCallback() { if (ready) ready(this.shadowRoot); }
});

define('lpu-logo', 't-lpu');
define('naac-logo', 't-naac');
define('browser-tab', 't-tab');
define('tab-strip', 't-tabs');
/* The host name in the address is brighter than the scheme and the path. */
define('nav-toolbar', 't-toolbar', root => {
  const input = root.querySelector('input');
  const pen = document.createElement('canvas').getContext('2d');
  pen.font = '16px "Segoe UI", "Open Sans", "Noto Sans", sans-serif';
  const a = Math.round(pen.measureText('https://').width);
  const b = Math.round(pen.measureText('https://www.lpu.in').width);
  input.style.backgroundImage = `linear-gradient(90deg, #94959b ${a}px, #fff ${a}px, #fff ${b}px, #94959b ${b}px)`;
});
define('bookmark-link', 't-bm');
define('bookmark-bar', 't-bookmarks');
define('site-header', 't-header');
define('payment-slip', 't-slip');
define('scroll-rail', 't-scroll');
define('chat-launcher', 't-chat');
define('task-bar', 't-taskbar');
define('desktop-screen', 't-desktop');
</script>
</body>
</html>
